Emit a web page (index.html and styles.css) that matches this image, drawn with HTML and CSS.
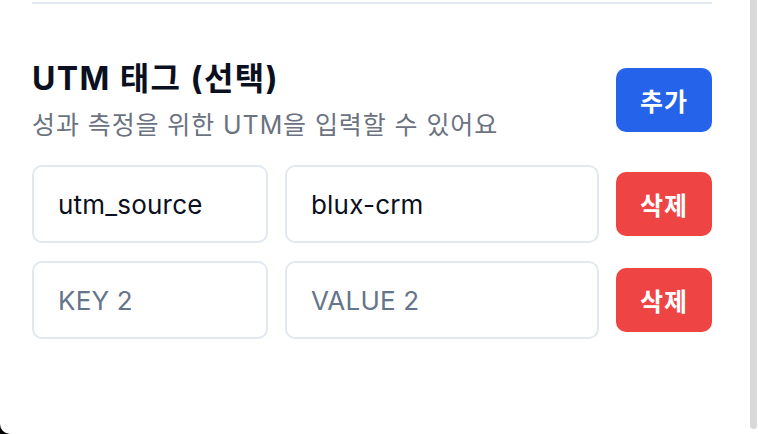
FILE: index.html
```html
<!DOCTYPE html>
<html lang="ko">
<head>
<meta charset="utf-8">
<link rel="stylesheet" href="styles.css">
</head>
<body>
<div class="frame">
  <main class="panel">
    <div class="divider"></div>
    <section class="header">
      <div class="titles">
        <h2 class="title">UTM 태그 (선택)</h2>
        <p class="subtitle">성과 측정을 위한 UTM을 입력할 수 있어요</p>
      </div>
      <button class="btn btn-add">추가</button>
    </section>
    <div class="rows">
      <div class="row">
        <input class="field key" value="utm_source" placeholder="KEY 1">
        <input class="field value" value="blux-crm" placeholder="VALUE 1">
        <button class="btn btn-del">삭제</button>
      </div>
      <div class="row">
        <input class="field key" value="" placeholder="KEY 2">
        <input class="field value" value="" placeholder="VALUE 2">
        <button class="btn btn-del">삭제</button>
      </div>
    </div>
  </main>
  <div class="scrollbar"><div class="thumb"></div></div>
</div>
</body>
</html>
```

FILE: styles.css
```css
* { box-sizing: border-box; }
html, body {
  margin: 0;
  height: 100%;
  background: #000;
}
body {
  font-family: "Inter", "Noto Sans CJK KR", sans-serif;
  overflow: hidden;
}
.frame {
  display: flex;
  height: 434px;
  width: 758px;
  background: #fff;
  border-bottom-left-radius: 10px;
}
.panel {
  width: 750px;
  padding: 2px 38px 0 32px;
}
.divider {
  height: 2px;
  background: #e2e8f0;
}
.header {
  margin-top: 60px;
  height: 72px;
  display: flex;
  align-items: center;
  justify-content: space-between;
}
.title {
  margin: 0;
  font-size: 32px;
  line-height: 40px;
  font-weight: 700;
  color: #0b1020;
  letter-spacing: 1.4px;
}
.subtitle {
  margin: 9px 0 0;
  font-size: 25px;
  line-height: 34px;
  color: #6b7280;
  letter-spacing: 0.9px;
}
.btn {
  width: 96px;
  height: 64px;
  border: none;
  border-radius: 10px;
  color: #fff;
  font-family: "Inter", "Noto Sans CJK KR", sans-serif;
  font-size: 25px;
  font-weight: 600;
  letter-spacing: 1px;
  padding: 0;
}
.btn-add { background: #2563eb; }
.btn-del { background: #ef4444; }
.rows {
  margin-top: 29px;
  display: flex;
  flex-direction: column;
  gap: 18px;
}
.row {
  display: flex;
  align-items: center;
  gap: 17px;
}
.field {
  height: 78px;
  border: 2px solid #e2e8f0;
  border-radius: 10px;
  padding: 0 24px;
  font-family: "Inter", "Noto Sans CJK KR", sans-serif;
  font-size: 26px;
  letter-spacing: 0.2px;
  color: #0b1020;
  background: #fff;
  outline: none;
}
.field::placeholder { color: #64748b; }
.key { width: 236px; }
.value { width: 314px; }
.scrollbar {
  width: 8px;
  padding-right: 1px;
}
.thumb {
  width: 7px;
  height: 429px;
  background: #d9d9d9;
  border-radius: 0 0 4px 4px;
}
```
